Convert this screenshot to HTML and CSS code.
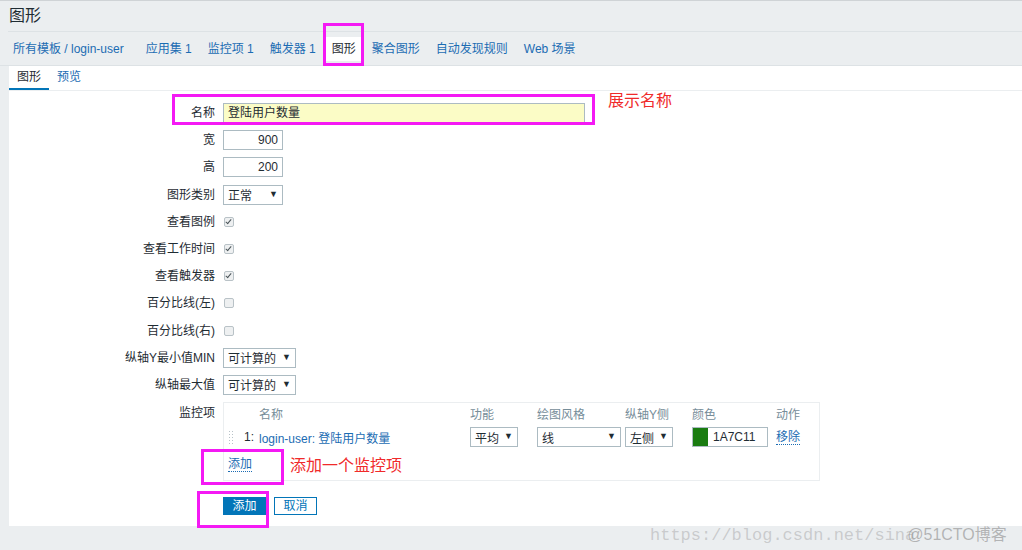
FILE: index.html
```html
<!DOCTYPE html>
<html lang="zh-CN">
<head>
  <meta charset="UTF-8">
  <title>图形</title>
  <link rel="stylesheet" href="styles.css">
</head>
<body>
  <div class="page">
    <div class="header">
      <h1 class="title">图形</h1>
    </div>

    <!-- 模板导航 -->
    <div class="nav">
      <a class="nav-item first">所有模板 / login-user</a>
      <a class="nav-item">应用集 1</a>
      <a class="nav-item">监控项 1</a>
      <a class="nav-item">触发器 1</a>
      <a class="nav-item current">图形</a>
      <a class="nav-item">聚合图形</a>
      <a class="nav-item">自动发现规则</a>
      <a class="nav-item">Web 场景</a>
    </div>

    <div class="panel">
      <div class="subtabs">
        <span class="subtab active">图形</span>
        <span class="subtab">预览</span>
      </div>

      <div class="form">
        <div class="row">
          <label class="label">名称</label>
          <div class="input name-input">登陆用户数量</div>
          <span class="note note-name">展示名称</span>
        </div>
        <div class="row">
          <label class="label">宽</label>
          <div class="input num-input">900</div>
        </div>
        <div class="row">
          <label class="label">高</label>
          <div class="input num-input">200</div>
        </div>
        <div class="row">
          <label class="label">图形类别</label>
          <div class="select w60"><span>正常</span><i class="arrow">▼</i></div>
        </div>
        <div class="row">
          <label class="label">查看图例</label>
          <span class="check on"></span>
        </div>
        <div class="row">
          <label class="label">查看工作时间</label>
          <span class="check on"></span>
        </div>
        <div class="row">
          <label class="label">查看触发器</label>
          <span class="check on"></span>
        </div>
        <div class="row">
          <label class="label">百分比线(左)</label>
          <span class="check"></span>
        </div>
        <div class="row">
          <label class="label">百分比线(右)</label>
          <span class="check"></span>
        </div>
        <div class="row">
          <label class="label">纵轴Y最小值MIN</label>
          <div class="select w73"><span>可计算的</span><i class="arrow">▼</i></div>
        </div>
        <div class="row">
          <label class="label">纵轴最大值</label>
          <div class="select w73"><span>可计算的</span><i class="arrow">▼</i></div>
        </div>

        <div class="row row-items">
          <label class="label">监控项</label>
          <div class="items">
            <div class="items-grid">
              <span></span><span></span>
              <span class="th">名称</span>
              <span class="th">功能</span>
              <span class="th">绘图风格</span>
              <span class="th">纵轴Y侧</span>
              <span class="th">颜色</span>
              <span class="th">动作</span>

              <span class="grip"></span>
              <span class="idx">1:</span>
              <a class="link">login-user: 登陆用户数量</a>
              <div class="select w48"><span>平均</span><i class="arrow">▼</i></div>
              <div class="select w84"><span>线</span><i class="arrow">▼</i></div>
              <div class="select w48"><span>左侧</span><i class="arrow">▼</i></div>
              <div class="color-input"><span class="swatch"></span>1A7C11</div>
              <a class="link dotted">移除</a>
            </div>
            <div class="items-add">
              <a class="link dotted">添加</a>
              <span class="note">添加一个监控项</span>
            </div>
          </div>
        </div>

        <div class="buttons">
          <button class="btn primary">添加</button>
          <button class="btn">取消</button>
        </div>
      </div>
    </div>

    <!-- 标注框 -->
    <div class="mark mark-nav"></div>
    <div class="mark mark-name"></div>
    <div class="mark mark-add"></div>
    <div class="mark mark-submit"></div>

    <div class="watermark">https://blog.csdn.net/sina<span class="wm-cto">@51CTO博客</span></div>
  </div>
</body>
</html>
```

FILE: styles.css
```css
body {
  margin: 0;
  padding: 0;
  background: #ebeef0;
  color: #1f2c33;
  font-family: "Liberation Sans", "Noto Sans CJK SC", sans-serif;
  font-size: 12px;
  overflow: hidden;
}

a {
  color: #1b6cb3;
  text-decoration: none;
}

.page {
  position: relative;
  height: 550px;
  border-top: 1px solid #cfd3d6;
}

.header {
  margin-left: 8px;
  height: 30px;
  border-bottom: 1px solid #dde2e5;
}

.title {
  margin: 0;
  padding-left: 1px;
  font-size: 16px;
  font-weight: normal;
  line-height: 30px;
  color: #1f2c33;
}

.nav {
  display: flex;
  height: 33px;
  align-items: center;
  padding-left: 13px;
  border-bottom: 1px solid #dde2e5;
}

.nav-item {
  padding: 0 8px;
  line-height: 24px;
  color: #1b6cb3;
}

.nav-item.first {
  padding-left: 0;
  padding-right: 14px;
}

.nav-item.current {
  background: #fff;
  color: #1f2c33;
}

.panel {
  margin-left: 9px;
  height: 460px;
  background: #fff;
}

.subtabs {
  display: flex;
  height: 24px;
  border-bottom: 1px solid #ebeef0;
}

.subtab {
  padding: 0 8px;
  line-height: 22px;
  color: #1b6cb3;
  border-bottom: 2px solid transparent;
}

.subtab.active {
  color: #1f2c33;
  border-bottom-color: #0275b8;
}

.form {
  display: flex;
  flex-direction: column;
  gap: 7.2px;
  padding-top: 12px;
}

.row {
  display: flex;
  align-items: center;
  height: 20px;
}

.label {
  width: 206px;
  margin-right: 8px;
  text-align: right;
  line-height: 20px;
  white-space: nowrap;
}

.input {
  box-sizing: border-box;
  height: 20px;
  padding: 0 4px;
  border: 1px solid #acbbc2;
  line-height: 18px;
  background: #fff;
}

.name-input {
  width: 362px;
  background: #fbfcc6;
}

.num-input {
  width: 60px;
  text-align: right;
}

.note {
  color: #f02a2a;
  font-size: 16px;
  line-height: 20px;
  font-family: "Noto Sans CJK SC", sans-serif;
}

.note-name {
  align-self: flex-start;
  margin-top: -14px;
  margin-left: 23px;
}

.select {
  box-sizing: border-box;
  display: flex;
  align-items: center;
  justify-content: space-between;
  height: 20px;
  padding: 0 4px 0 4px;
  border: 1px solid #acbbc2;
  background: #fff;
  line-height: 18px;
}

.select span {
  padding-top: 3px;
}

.arrow {
  font-style: normal;
  font-size: 9px;
  color: #1f2c33;
  margin-top: -2px;
}

.w60 { width: 60px; }
.w73 { width: 73px; }
.w48 { width: 48px; }
.w84 { width: 84px; }

.check {
  box-sizing: border-box;
  position: relative;
  width: 10px;
  height: 10px;
  margin-left: 1px;
  border: 1px solid #b9c2c7;
  border-radius: 2px;
  background: #eef0f1;
}

.check.on::after {
  content: "";
  position: absolute;
  left: 2px;
  top: 0px;
  width: 2px;
  height: 5px;
  border: solid #4a5358;
  border-width: 0 1.5px 1.5px 0;
  transform: rotate(40deg);
}

.row-items {
  align-items: flex-start;
  height: auto;
}

.row-items .label {
  padding-top: 1px;
}

.items {
  width: 591px;
  padding: 0 0 6px 4px;
  border: 1px solid #ebeef0;
}

.items-grid {
  display: grid;
  grid-template-columns: 16px 15px 211px 67px 88px 67px 84px 1fr;
  grid-template-rows: 20px 20px;
  row-gap: 4px;
  align-items: center;
}

.th {
  color: #768d99;
}

.grip {
  width: 5px;
  height: 15px;
  background-image: radial-gradient(circle, #b8c2c8 0.9px, transparent 1px);
  background-size: 3px 3px;
}

.idx {
  color: #1f2c33;
}

.color-input {
  box-sizing: border-box;
  display: flex;
  align-items: center;
  width: 76px;
  height: 20px;
  border: 1px solid #acbbc2;
  line-height: 18px;
}

.swatch {
  width: 15px;
  height: 18px;
  margin-right: 5px;
  background: #1a7c11;
}

.link.dotted {
  justify-self: start;
  border-bottom: 1px dotted #1b6cb3;
  line-height: 14px;
}

.items-add {
  display: flex;
  align-items: center;
  gap: 38px;
  height: 20px;
  margin-top: 7px;
}

.buttons {
  display: flex;
  gap: 8px;
  margin-top: 9px;
  padding-left: 214px;
}

.btn {
  box-sizing: border-box;
  width: 43px;
  height: 18px;
  padding: 0;
  border: 1px solid #0275b8;
  background: #fff;
  color: #0275b8;
  font-family: "Liberation Sans", "Noto Sans CJK SC", sans-serif;
  font-size: 12px;
  line-height: 16px;
}

.btn.primary {
  background: #0275b8;
  color: #fff;
}

/* 截图上的洋红色标注 */
.mark {
  position: absolute;
  border: 3px solid #f419f4;
}

.mark-nav { left: 323px; top: 22px; width: 35px; height: 37px; }
.mark-name { left: 172px; top: 93px; width: 417px; height: 25px; }
.mark-add { left: 201px; top: 448px; width: 77px; height: 30px; }
.mark-submit { left: 197px; top: 490px; width: 66px; height: 31px; }

.watermark {
  position: absolute;
  left: 650px;
  top: 520px;
  font-family: "Liberation Mono", monospace;
  font-size: 17px;
  color: rgba(160, 160, 160, 0.45);
  white-space: nowrap;
}

.wm-cto {
  margin-left: -8px;
  font-family: "Liberation Sans", "Noto Sans CJK SC", sans-serif;
  font-size: 16px;
  color: rgba(140, 140, 140, 0.6);
}
```
